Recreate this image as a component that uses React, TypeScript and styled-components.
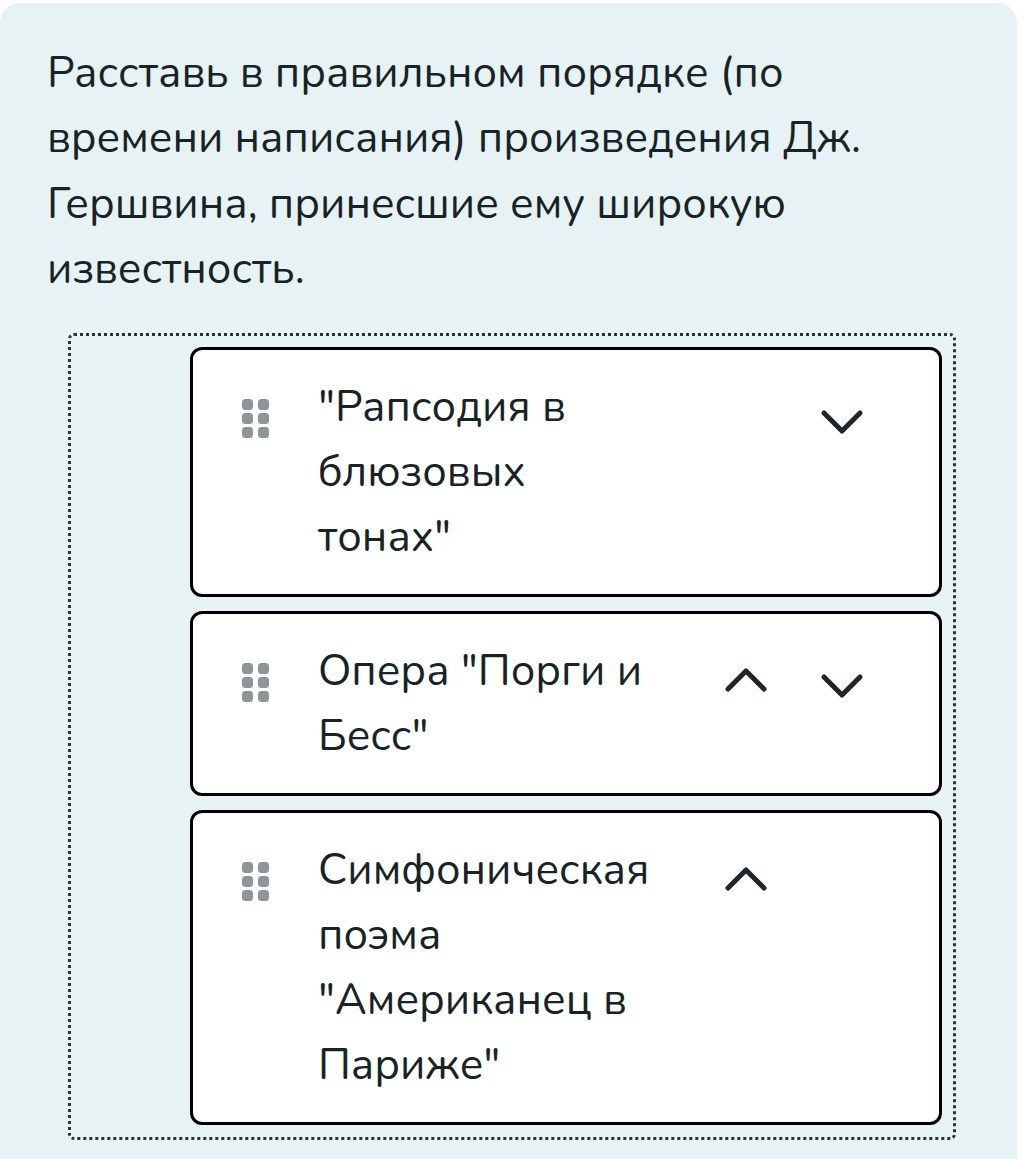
import React from "react";
import styled, { createGlobalStyle } from "styled-components";

const GlobalStyle = createGlobalStyle`
  body {
    margin: 0;
    background: #ffffff;
    font-family: "Nunito", "Open Sans", "Noto Sans", sans-serif;
  }
`;

const Panel = styled.div`
  margin-top: 3px;
  width: 1017px;
  min-height: calc(100vh - 3px);
  box-sizing: border-box;
  padding: 37px 0 40px 47px;
  background: #e7f2f5;
  border-radius: 20px 20px 0 0;
`;

const Question = styled.p`
  margin: 0 0 32px;
  width: 860px;
  font-size: 43.5px;
  line-height: 65.3px;
  color: #172326;
`;

const DropZone = styled.div`
  margin-left: 21px;
  width: 888px;
  box-sizing: border-box;
  padding: 11px 11px 12px 119px;
  border: 3px dotted #2a3034;
  border-radius: 6px;
  display: flex;
  flex-direction: column;
  gap: 14px;
`;

const Card = styled.div`
  display: flex;
  align-items: flex-start;
  padding: 24px 0 25px;
  background: #ffffff;
  border: 3px solid #000000;
  border-radius: 12px;
`;

const Handle = styled.div`
  margin: 25px 0 0 49px;
  display: grid;
  grid-template-columns: 11px 11px;
  grid-auto-rows: 11px;
  column-gap: 5px;
  row-gap: 3px;
  cursor: grab;

  span {
    background: #8e9698;
    border-radius: 3.5px;
  }
`;

const Label = styled.div`
  margin-left: 49px;
  width: 342px;
  font-size: 43.5px;
  line-height: 65px;
  color: #172326;
`;

const Controls = styled.div`
  display: flex;
  margin-left: 64px;
  gap: 52px;
`;

const MoveButton = styled.button<{ $offset: number; $hidden?: boolean }>`
  margin-top: ${(p) => p.$offset}px;
  padding: 0;
  border: none;
  background: none;
  width: 44px;
  height: 28px;
  cursor: pointer;
  visibility: ${(p) => (p.$hidden ? "hidden" : "visible")};

  svg {
    display: block;
  }
`;

const Chevron: React.FC<{ dir: "up" | "down" }> = ({ dir }) => (
  <svg width="44" height="28" viewBox="0 0 44 28">
    <path
      d={dir === "up" ? "M4 23 L22 5 L40 23" : "M4 5 L22 23 L40 5"}
      fill="none"
      stroke="#1f2529"
      strokeWidth="5"
      strokeLinecap="round"
      strokeLinejoin="round"
    />
  </svg>
);

const items = [
  '"Рапсодия в блюзовых тонах"',
  'Опера "Порги и Бесс"',
  'Симфоническая поэма "Американец в Париже"',
];

const App: React.FC = () => {
  return (
    <>
      <GlobalStyle />
      <Panel>
        <Question>
          Расставь в правильном порядке (по времени написания) произведения
          Дж. Гершвина, принесшие ему широкую известность.
        </Question>
        <DropZone>
          {items.map((text, i) => (
            <Card key={text}>
              <Handle>
                {Array.from({ length: 6 }).map((_, k) => (
                  <span key={k} />
                ))}
              </Handle>
              <Label>{text}</Label>
              <Controls>
                <MoveButton $offset={28} $hidden={i === 0} aria-label="Вверх">
                  <Chevron dir="up" />
                </MoveButton>
                <MoveButton
                  $offset={34}
                  $hidden={i === items.length - 1}
                  aria-label="Вниз"
                >
                  <Chevron dir="down" />
                </MoveButton>
              </Controls>
            </Card>
          ))}
        </DropZone>
      </Panel>
    </>
  );
};

export default App;
